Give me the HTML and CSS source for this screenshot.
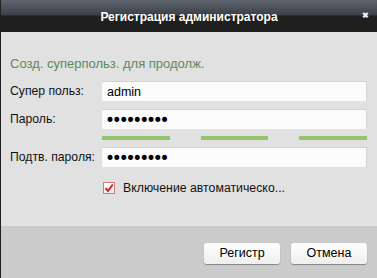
FILE: index.html
```html
<!DOCTYPE html>
<html lang="ru">
<head>
    <meta charset="UTF-8">
    <meta name="viewport" content="width=device-width, initial-scale=1.0">
    <title>Регистрация администратора</title>
    <link rel="stylesheet" href="styles.css">
</head>
<body>
    <div class="dialog">
      <div class="dialog-head">
        <span class="dialog-title">Регистрация администратора</span>
        <span class="dialog-close">&#x2716;</span>
      </div>
      <div class="dialog-body">
        <p class="hint">Созд. суперпольз. для продолж.</p>
        <div class="form-row">
          <label class="form-label">Супер польз:</label>
          <input class="form-input" type="text" value="admin">
        </div>
        <div class="form-row">
          <label class="form-label">Пароль:</label>
          <input class="form-input" type="password" value="123456789">
        </div>
        <div class="strength">
          <span class="strength-bar"></span>
          <span class="strength-bar"></span>
          <span class="strength-bar"></span>
        </div>
        <div class="form-row">
          <label class="form-label">Подтв. пароля:</label>
          <input class="form-input" type="password" value="123456789">
        </div>
        <div class="check-row">
          <span class="check">
            <svg width="10" height="10" viewBox="0 0 10 10"><path d="M1.5 5.2 L4 8 L8.8 1.5" fill="none" stroke="#d0202a" stroke-width="2"/></svg>
          </span>
          <span class="check-label">Включение автоматическо...</span>
        </div>
      </div>
      <div class="dialog-foot">
        <a class="button" href="#">Регистр</a>
        <a class="button" href="#">Отмена</a>
      </div>
    </div>
</body>
</html>
```

FILE: styles.css
```css
html {
  box-sizing: border-box;
}

*,
*:before,
*:after {
  box-sizing: inherit;
}

body {
  margin: 0;
  font-family: "Liberation Sans", Arial, sans-serif;
  font-size: 12px;
  color: #111;
}

.dialog {
  width: 377px;
  height: 278px;
  display: flex;
  flex-direction: column;
  border-left: 1px solid #1f1f1f;
}

.dialog-head {
  height: 32px;
  display: flex;
  align-items: center;
  justify-content: center;
  position: relative;
  background: linear-gradient(#5e656e 0, #394047 15px, #1f1f1f 16px, #1f1f1f 100%);
  color: #fff;
}
.dialog-title {
  font-weight: bold;
  font-size: 12px;
  padding-top: 2px;
}
.dialog-close {
  position: absolute;
  right: 8px;
  top: 11px;
  font-size: 8px;
  font-weight: bold;
  color: #eee;
}

.dialog-body {
  flex: 1;
  background: #e1e1e1;
  padding: 0 10px 0 9px;
}

.hint {
  margin: 25px 0 10px;
  color: #5a8a5c;
  font-size: 13px;
  line-height: 14px;
}

.form-row {
  display: grid;
  grid-template-columns: 92px 1fr;
  align-items: center;
  height: 20px;
  margin-bottom: 8px;
}
.form-label {
  font-size: 12.2px;
  line-height: 14px;
}
.form-input {
  width: 100%;
  height: 20px;
  margin: 0;
  padding: 0 5px;
  border: 0;
  border-top: 1px solid #d2d2d2;
  border-right: 1px solid #d6d6d6;
  background: #fbfbfb;
  font-family: inherit;
  font-size: 12.5px;
  color: #000;
  outline: none;
}
.form-input[type="password"] {
  font-family: "DejaVu Sans", sans-serif;
  font-size: 17px;
  line-height: 18px;
  padding-left: 3px;
  letter-spacing: -3.2px;
}

.strength {
  display: flex;
  gap: 31px;
  margin: -1px 0 7px 92px;
}
.strength-bar {
  width: 68px;
  height: 4px;
  background: #95c46f;
}

.check-row {
  display: flex;
  align-items: center;
  padding-left: 93px;
  margin-top: 14px;
}
.check {
  width: 12px;
  height: 12px;
  display: flex;
  align-items: center;
  justify-content: center;
  border: 1px solid #d47c7c;
  background: linear-gradient(#fff, #ececec);
  margin-right: 8px;
}
.check-label {
  font-size: 12.3px;
  line-height: 14px;
}

.dialog-foot {
  height: 52px;
  background: #cbcbcb;
  display: flex;
  justify-content: flex-end;
  align-items: flex-start;
  gap: 11px;
  padding: 17px 10px 0 0;
}

.button {
  display: inline-block;
  width: 76px;
  height: 21px;
  line-height: 20px;
  text-align: center;
  border-radius: 3px;
  background: linear-gradient(#ffffff, #eeeeee);
  box-shadow: 0 1px 1px rgba(0, 0, 0, 0.35);
  color: #000;
  font-size: 12.5px;
  text-decoration: none;
}
```
